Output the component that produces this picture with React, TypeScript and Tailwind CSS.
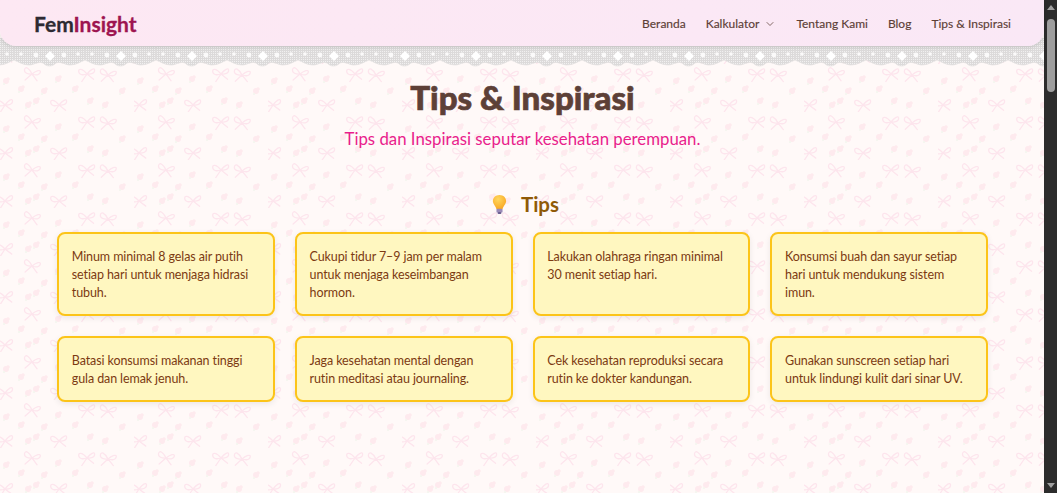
import React from "react";
import { ChevronDown } from "lucide-react";

const tips = [
  "Minum minimal 8 gelas air putih setiap hari untuk menjaga hidrasi tubuh.",
  "Cukupi tidur 7–9 jam per malam untuk menjaga keseimbangan hormon.",
  "Lakukan olahraga ringan minimal 30 menit setiap hari.",
  "Konsumsi buah dan sayur setiap hari untuk mendukung sistem imun.",
  "Batasi konsumsi makanan tinggi gula dan lemak jenuh.",
  "Jaga kesehatan mental dengan rutin meditasi atau journaling.",
  "Cek kesehatan reproduksi secara rutin ke dokter kandungan.",
  "Gunakan sunscreen setiap hari untuk lindungi kulit dari sinar UV.",
];

const bows: [number, number, number][] = [[32, 10, 8], [87, 10, -6], [108, 11, 6], [5, 41, -8], [59, 41, -6]];
const flowers: [number, number][] = [[58, 15], [6, 17], [21, 25], [75, 25], [122, 27], [44, 27], [36, 37], [90, 37], [105, 41], [28, 41]];

function Backdrop() {
  return (
    <svg className="absolute inset-0 h-full w-full" aria-hidden="true">
      <defs>
        <pattern id="tile" width="134" height="48" patternUnits="userSpaceOnUse" y="16">
          {bows.map(([x, y, r], i) => (
            <g key={i} transform={`translate(${x} ${y}) rotate(${r})`} fill="none" stroke="#fde5ed" strokeWidth="1.3" strokeLinecap="round">
              <path d="M0 0C-4 -6 -8 -7 -8 -3C-8 0 -4 1 0 0C4 -4 8 -6 8 -3C8 0 4 1 0 0" />
              <path d="M0 0L-6 7M0 0L6 6" />
            </g>
          ))}
          {flowers.map(([x, y], i) => (
            <g key={i}>
              <circle cx={x} cy={y} r="3" fill="#feeaee" />
              <circle cx={x + 2} cy={y - 2} r="1.8" fill="#feeaee" />
              <circle cx={x - 2} cy={y + 3} r="1" fill="#f3f6ee" />
            </g>
          ))}
        </pattern>
        <pattern id="hatch" width="2" height="2" patternUnits="userSpaceOnUse">
          <rect width="2" height="2" fill="#f1f0f0" />
          <path d="M0 .5H2M.5 0V2" stroke="#dcdada" strokeWidth="1" />
        </pattern>
        <pattern id="lace" width="71" height="30" patternUnits="userSpaceOnUse" x="14" y="38">
          <path d="M0 0H71V22C66 24 62 27 56 27C51 27 47 23 42 25C38 29 33 29 29 25C24 23 20 27 15 27C9 27 5 24 0 22Z" fill="url(#hatch)" stroke="#e2e0e0" strokeWidth=".7" />
          <path d="M36 13L41 18L36 23L31 18Z" fill="#fff" />
          <circle cx="22" cy="17" r="2.4" fill="#fbfafa" />
          <circle cx="50" cy="17" r="2.4" fill="#fbfafa" />
          <circle cx="7" cy="16" r="1.8" fill="#fbfafa" />
          <circle cx="64" cy="16" r="1.8" fill="#fbfafa" />
        </pattern>
      </defs>
      <rect width="100%" height="100%" fill="#fff9f8" />
      <rect width="100%" height="100%" fill="url(#tile)" />
      <rect y="38" width="100%" height="30" fill="url(#lace)" />
    </svg>
  );
}

function Bulb() {
  return (
    <svg viewBox="0 0 20 22" className="h-[21px] w-[19px]" aria-hidden="true">
      <defs>
        <radialGradient id="bulb" cx="40%" cy="30%" r="70%">
          <stop offset="0" stopColor="#ffd75e" />
          <stop offset="1" stopColor="#f9a825" />
        </radialGradient>
      </defs>
      <path d="M10 1C5.8 1 3 4 3 7.4C3 10.6 6 12.5 6.8 16H13.2C14 12.5 17 10.6 17 7.4C17 4 14.2 1 10 1Z" fill="url(#bulb)" />
      <rect x="6.8" y="15.5" width="6.4" height="4" rx="1" fill="#9a8bb8" />
      <rect x="8" y="19" width="4" height="2" rx="1" fill="#6d5f91" />
    </svg>
  );
}

export default function App() {
  return (
    <div className="flex h-[493px] w-full overflow-hidden font-['Lato','Noto_Sans',sans-serif]">
      <div className="relative min-w-0 flex-1">
        <Backdrop />
        <div className="relative">
          <header className="flex h-[46px] items-center justify-between rounded-b-[16px] bg-gradient-to-r from-[#fde8f3] to-[#fae8f6] pl-[34px] pr-[33px] shadow-[0_1px_4px_rgba(0,0,0,0.12)]">
            <div className="text-[21px] font-bold leading-none text-[#2d2a32] [-webkit-text-stroke:0.3px]">
              Fem<span className="text-[#9d1550]">Insight</span>
            </div>
            <nav className="flex items-center gap-5 pt-[1px] text-[12px] text-[#5d4037] [-webkit-text-stroke:0.15px]">
              <span>Beranda</span>
              <span className="flex items-center gap-[5px]">
                Kalkulator
                <ChevronDown className="h-[12px] w-[12px]" strokeWidth={1.5} />
              </span>
              <span>Tentang Kami</span>
              <span>Blog</span>
              <span>Tips &amp; Inspirasi</span>
            </nav>
          </header>
          <main className="pl-[57px] pr-[56px] pt-[31px]">
            <h1 className="text-center text-[33px] font-black leading-[40px] text-[#5d4037] [-webkit-text-stroke:0.7px]">Tips &amp; Inspirasi</h1>
            <p className="mt-[11px] text-center text-[16.8px] leading-[22px] text-[#e91e8c]">
              Tips dan Inspirasi seputar kesehatan perempuan.
            </p>
            <h2 className="mt-[40px] flex items-center justify-center gap-[12px] pl-[4px] text-[20.5px] font-bold leading-[28px] text-[#8f5a06]">
              <Bulb />
              Tips
            </h2>
            <div className="mt-[14px] grid grid-cols-4 gap-5">
              {tips.map((t) => (
                <div
                  key={t}
                  className="rounded-[8px] border-2 border-[#fcc419] bg-[#fff7c0] px-[12.8px] pt-[14px] pb-[11.6px] text-[12.5px] leading-[18.2px] tracking-[-0.1px] text-[#7c3a12] shadow-[0_2px_6px_rgba(0,0,0,0.08)]"
                >
                  {t}
                </div>
              ))}
            </div>
          </main>
        </div>
      </div>
      <div className="flex w-[13px] shrink-0 flex-col items-center bg-[#2c2c2c]">
        <div className="mt-[5px] h-0 w-0 border-x-[4px] border-b-[5px] border-x-transparent border-b-[#a0a0a0]" />
        <div className="mt-[9px] h-[73px] w-[8px] rounded-[4px] bg-[#9e9e9e]" />
        <div className="flex-1" />
        <div className="mb-[5px] h-0 w-0 border-x-[4px] border-t-[5px] border-x-transparent border-t-[#a0a0a0]" />
      </div>
    </div>
  );
}
